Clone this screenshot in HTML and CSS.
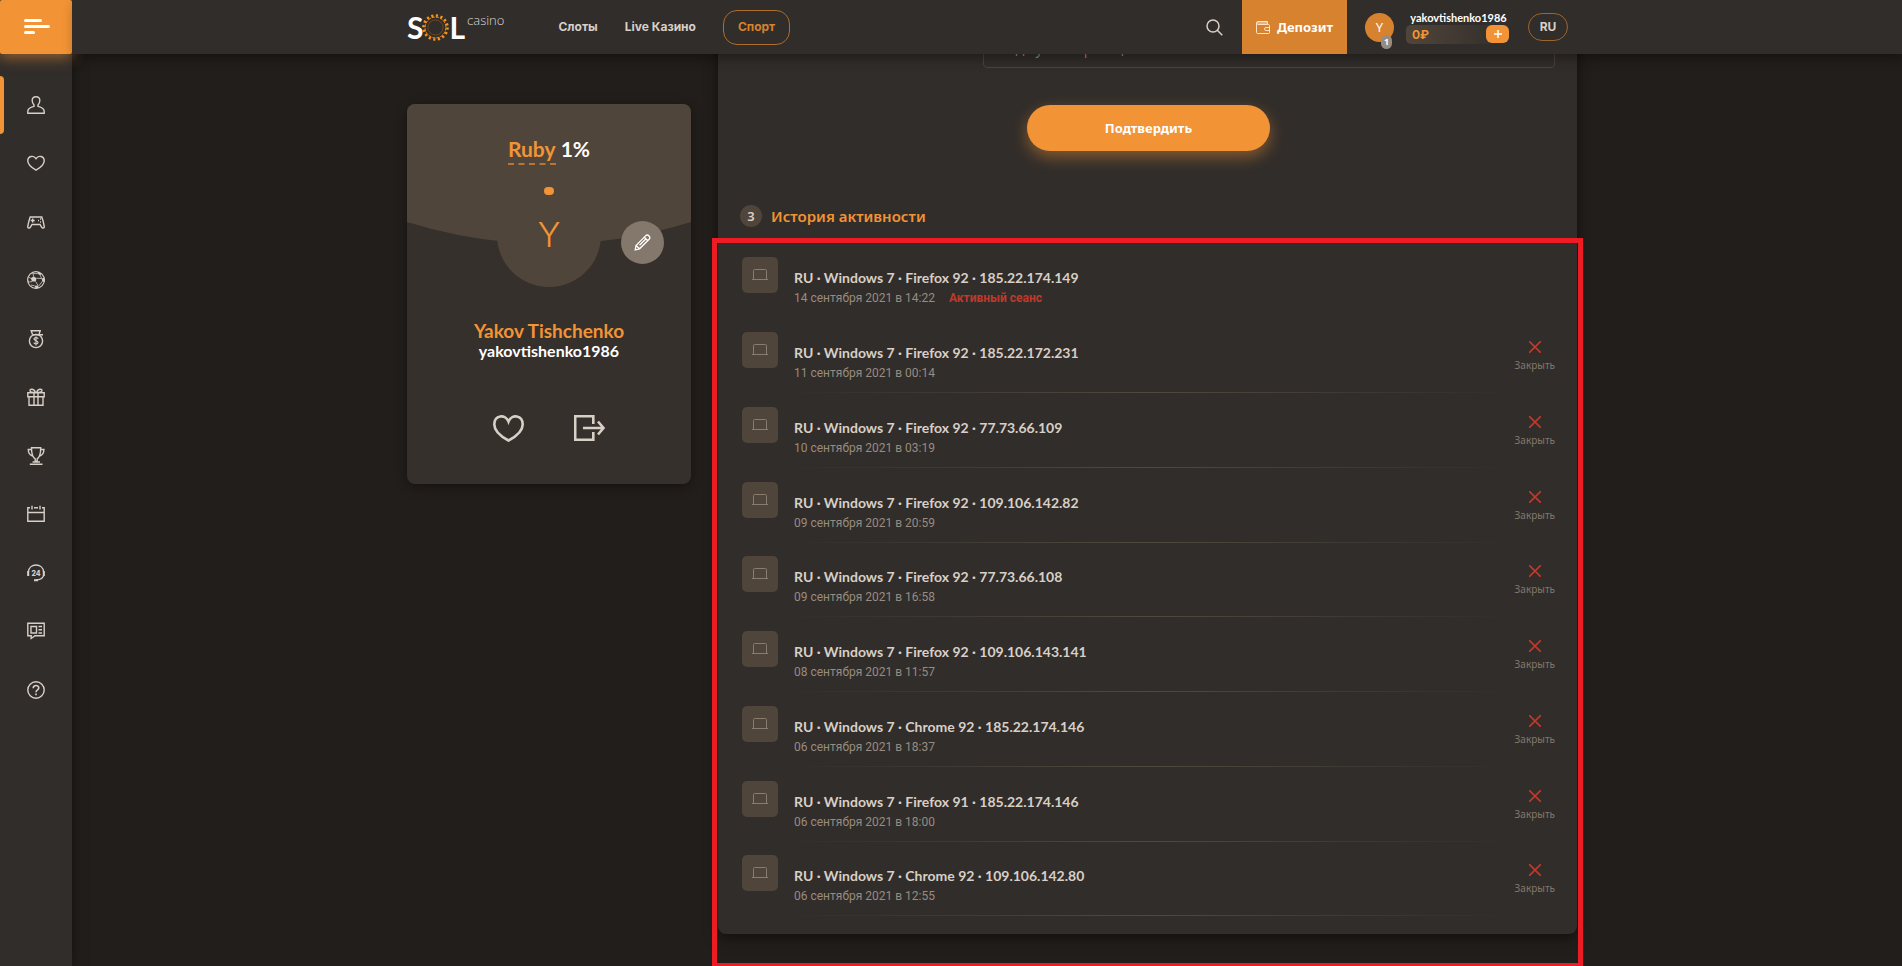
FILE: index.html
```html
<!DOCTYPE html>
<html lang="ru">
<head>
<meta charset="utf-8">
<title>SOL casino</title>
<link rel="stylesheet" href="styles.css">
</head>
<body>
<aside class="sidebar">
  <button class="menu" aria-label="Меню"><svg width="26" height="16" viewBox="0 0 26 16"><path d="M1.500 1.500h15M1.500 7.500h23M1.500 13.500h8" stroke="#fff" stroke-width="3" stroke-linecap="round"/></svg></button>
  <nav class="side-nav" aria-label="Разделы">
    <a class="side-link active" href="#" aria-label="Профиль"><svg class="icon" viewBox="0 0 18 18"><path d="M9 .7c2.500 0 4 1.600 3.800 4-.1 2-1 3.300-1.800 4.300v1.400c3 .8 6.200 2.200 6.200 5v1.900H.8v-1.900c0-2.800 3.200-4.200 6.200-5V9C6.200 8 5.300 6.700 5.200 4.700 5 2.300 6.500.7 9 .7z"/></svg></a>
    <a class="side-link" href="#" aria-label="Избранное"><svg class="icon" viewBox="0 0 18 18"><path d="M9 16.200C4 13.400.8 10.400.8 6.800c0-5 6-5.800 8.200-2.200 2.200-3.600 8.200-2.800 8.200 2.200 0 3.600-3.200 6.600-8.200 9.400z"/></svg></a>
    <a class="side-link" href="#" aria-label="Игры"><svg class="icon" viewBox="0 0 18 18"><path d="M3.200 4h11.600l1.400 4.500 1.100 5c.2 1.800-1.900 2-2.700.7L13 11.500H5l-1.600 2.700c-.8 1.300-2.900 1.100-2.700-.7l1.100-5z"/><path d="M5.700 5.500v4M3.700 7.500h4M11 7.500h1M13 6h1M13 9h1"/></svg></a>
    <a class="side-link" href="#" aria-label="Спорт"><svg class="icon" viewBox="0 0 18 18"><circle cx="9" cy="9" r="8.400" stroke-width="1.100"/><path d="M6.600 5.200 9.600 7.200 8.700 10.600H5L3.800 7.300zM10.800.8l4 2-1.600 1.400-2.800-1.400zM17.500 6.800v4.400l-2.200-.8-.6-2.800zM7.500 14.800l3.600-.2.800 2.200-3 .9zM.6 8.200l1.600 2.700-.6 1.600zM3.800 2.500 6.700.9 6 2.600z" fill="#d8cfc7" stroke="none"/><path d="M6.600 5.200 6 2.600M9.600 7.200l5.100.4M13.200 4.200l1.500 3.400M8.700 10.600l2.400 4M5 10.600 2.200 11M3.800 7.300 1.500 6M15.300 10.400l-3.400 4.500M6 2.600h4.400M7.500 14.800 4 14" stroke-width=".8"/></svg></a>
    <a class="side-link" href="#" aria-label="Деньги"><svg class="icon" viewBox="0 0 18 18"><path d="M5.500 4.500 4.200.8h9L12 4.500M5.500 4.700H16"/><circle cx="9" cy="11" r="6.600"/><path d="M11 9c0-2-4-2-4 0s4 1.600 4 3.500-4 2-4 0M9 6.500v9" stroke-width="1.200"/></svg></a>
    <a class="side-link" href="#" aria-label="Подарки"><svg class="icon" viewBox="0 0 18 18"><path d="M.8 4.700h16.400v4H.8zM2 8.700v8.500h14V8.700M7 4.700v12.500M11 4.700v12.500M8.500 4.500C6 4.500 3 4.500 3 2.500S7.500.5 8.500 4.500zM9.500 4.500C12 4.500 15 4.500 15 2.500S10.500.5 9.500 4.500z"/></svg></a>
    <a class="side-link" href="#" aria-label="Турниры"><svg class="icon" viewBox="0 0 18 18"><path d="M4.500.8h9.200c0 6-1 9.500-3.500 11v2.500h-2v-2.500C5.500 10.300 4.500 6.800 4.500.8zM4.500 2.500H1.300c0 3.500 1.400 5.500 4.200 6.500M13.700 2.500h3.200c0 3.500-1.400 5.500-4.200 6.500M5.500 15h7.500M2.800 17.300H15.500"/></svg></a>
    <a class="side-link" href="#" aria-label="Календарь"><svg class="icon" viewBox="0 0 18 18"><path d="M3 2.800H.8v13.400h16.400V2.800H15M7 2.800h4M.8 7.500h16.400M5 .8v3.800M13 .8v3.800"/></svg></a>
    <a class="side-link" href="#" aria-label="Поддержка"><svg class="icon" viewBox="0 0 18 18"><path d="M1.300 11V8c1-9.300 14.400-9.300 15.400 0v3c-.4 3-2.500 4.700-7.500 5"/><path d="M1.200 7v5M16.800 7v5M7 16.200h4" stroke-width="2"/><text class="icon-text" x="9" y="11.500">24</text></svg></a>
    <a class="side-link" href="#" aria-label="Новости"><svg class="icon" viewBox="0 0 18 18"><path d="M.8 1.300h16.400v12.500H8L4.200 16.500v-2.700H.8zM4 4.500h5.500v6.500H4zM11.500 4.500H15M11.500 7.700H15M11.500 11H15"/></svg></a>
    <a class="side-link" href="#" aria-label="Помощь"><svg class="icon" viewBox="0 0 18 18"><circle cx="9" cy="9" r="8.200"/><path d="M6.200 7.200c0-3.600 5.600-3.600 5.600-.3 0 2-2.800 2-2.800 4.300M9 12.600v1.600" stroke-width="1.600"/></svg></a>
  </nav>
</aside>
<div class="page">
  <header class="header">
    <div class="wrap header-in">
      <a class="logo" href="#"><span>S</span><svg class="sun" width="27" height="27" viewBox="0 0 27 27" fill="none"><circle cx="13.500" cy="13.500" r="12" stroke="#f7941d" stroke-width="2.600" stroke-dasharray="2.200 2.513"/><circle cx="13.500" cy="13.500" r="10.400" stroke="#f7941d" stroke-width="1" stroke-dasharray="3 1.083"/><circle cx="13.500" cy="13.500" r="7.600" stroke="#6e4a20"/></svg><span>L</span><span class="logo-sub">casino</span></a>
      <nav class="top-nav" aria-label="Главное меню"><a href="#">Слоты</a><a href="#">Live Казино</a><a class="pill" href="#">Спорт</a></nav>
      <button class="search" aria-label="Поиск"><svg width="17" height="17" viewBox="0 0 17 17" fill="none" stroke="#d8cfc7" stroke-width="1.500"><circle cx="7" cy="7" r="6"/><path d="m11.300 11.300 5 5"/></svg></button>
      <button class="deposit"><svg width="14" height="13" viewBox="0 0 14 13" fill="none" stroke="#ffe3c4"><path d="M1.500 3.500h11a1 1 0 0 1 1 1v7a1 1 0 0 1-1 1h-11a1 1 0 0 1-1-1V2a1.500 1.500 0 0 1 1.500-1.500h9.500v3M13.500 6.500H10a1.500 1.500 0 0 0 0 3h3.500M1 2h10"/></svg>Депозит</button>
      <a class="avatar" href="#">Y<span class="level">1</span></a>
      <div class="account"><span class="login">yakovtishenko1986</span><div class="balance"><span>0₽</span><button class="plus" aria-label="Пополнить"><svg width="10" height="10" viewBox="0 0 10 10" stroke="#fff" stroke-width="1.500"><path d="M5 1v8M1 5h8"/></svg></button></div></div>
      <button class="lang">RU</button>
    </div>
  </header>
  <main class="main">
    <div class="wrap content">
    <section class="card">
      <svg class="card-bg" viewBox="0 0 284 140" preserveAspectRatio="none"><path d="M0 0h284v118Q142 162 0 118z" fill="#50453a"/></svg>
      <div class="card-body">
        <p class="rank"><a href="#">Ruby</a> 1%</p>
        <span class="dot"></span>
        <div class="face">Y</div>
        <h1 class="name">Yakov Tishchenko</h1>
        <p class="nick">yakovtishenko1986</p>
        <div class="actions">
          <button aria-label="Избранное"><svg width="31" height="27" viewBox="0 0 31 27" fill="none" stroke="#d8cfc7" stroke-width="2.600"><path d="M15.500 25.500C7 21 1.300 15.500 1.300 9.500c0-9.300 11-11 14.200-2.900 3.200-8.100 14.200-6.400 14.200 2.900 0 6-5.700 11.500-14.200 16z"/></svg></button>
          <button aria-label="Выйти"><svg width="31" height="26" viewBox="0 0 31 26" fill="none" stroke="#d8cfc7" stroke-width="2.600"><path d="M19.300 9V1.200H1.200v23.600h18.100V17M9 13h20M24 6.500l5.500 6.500-5.500 6.500"/></svg></button>
        </div>
      </div>
      <button class="edit" aria-label="Редактировать"><svg width="17" height="17" viewBox="0 0 17 17" fill="none" stroke="#fff" stroke-width="1.300"><path d="M1.200 15.800 2 11.500 11.800 1.600q1.600-1.400 3.200.4t.4 3L5.500 14.800zM2 11.500l3.500 3.300M5.500 11.300 12 4.700M10.300 3.200l3.500 3.500"/></svg></button>
    </section>
    <section class="panel">
      <form class="code-form">
        <input class="code" type="text" placeholder="Код аутентификации" aria-label="Код аутентификации">
        <button class="confirm" type="button">Подтвердить</button>
      </form>
      <h2 class="title"><span class="num">3</span>История активности</h2>
      <ul class="list" id="list"></ul>
      <div class="frame"></div>
    </section>
    </div>
  </main>
</div>
<script src="script.js"></script>
</body>
</html>
```
FILE: script.js
```js
const sessions = [
  ["Firefox 92", "185.22.174.149", "14 сентября 2021 в 14:22", true],
  ["Firefox 92", "185.22.172.231", "11 сентября 2021 в 00:14"],
  ["Firefox 92", "77.73.66.109", "10 сентября 2021 в 03:19"],
  ["Firefox 92", "109.106.142.82", "09 сентября 2021 в 20:59"],
  ["Firefox 92", "77.73.66.108", "09 сентября 2021 в 16:58"],
  ["Firefox 92", "109.106.143.141", "08 сентября 2021 в 11:57"],
  ["Chrome 92", "185.22.174.146", "06 сентября 2021 в 18:37"],
  ["Firefox 91", "185.22.174.146", "06 сентября 2021 в 18:00"],
  ["Chrome 92", "109.106.142.80", "06 сентября 2021 в 12:55"]
];
document.getElementById("list").innerHTML = sessions.map(([browser, ip, date, current]) => `
  <li class="row">
    <span class="device"><svg width="16" height="12" viewBox="0 0 16 12" fill="none" stroke="#8a7c6e"><path d="M1.500 10V1.500q0-1 1-1h11q1 0 1 1V10M0 10.500h16"/></svg></span>
    <div class="info">
      <p class="agent">RU · Windows 7 · ${browser} · ${ip}</p>
      <p class="date">${date}${current ? '<strong class="current">Активный сеанс</strong>' : ""}</p>
    </div>
    ${current ? "" : '<button class="close"><svg width="12" height="12" viewBox="0 0 12 12" stroke="#c0392b" stroke-width="1.600"><path d="m0 0 12 12M12 0 0 12"/></svg>Закрыть</button>'}
  </li>`).join("");
```
FILE: styles.css
```css
* { box-sizing: border-box; margin: 0; padding: 0; }
body {
  display: flex;
  height: 100vh;
  overflow: hidden;
  background: #221e1b;
  color: #d8cfc7;
  font-family: "Noto Sans", "Open Sans", sans-serif;
  font-size: 14px;
}
a { color: inherit; text-decoration: none; }
button { border: 0; background: none; color: inherit; font: inherit; cursor: pointer; }

.sidebar { width: 72px; flex: none; background: #312d2a; box-shadow: 0 0 12px rgba(0, 0, 0, .5); position: relative; z-index: 1; }
.menu { display: flex; align-items: center; justify-content: center; width: 72px; height: 54px; padding-left: 2px; border-radius: 2px; background: #f29335; box-shadow: 0 4px 14px rgba(242, 147, 53, .5); }
.side-nav { display: flex; flex-direction: column; padding-top: 21px; }
.side-link { display: flex; align-items: center; justify-content: center; height: 58px; }
.side-link:nth-child(odd) { height: 59px; }
.side-link.active::before { content: ""; width: 4px; height: 58px; border-radius: 0 4px 4px 0; background: #f29335; margin-right: auto; }
.side-link.active { padding-right: 27px; }
.icon { width: 18px; height: 18px; fill: none; stroke: #d8cfc7; stroke-width: 1.4px; overflow: visible; }
.icon-text { fill: #d8cfc7; stroke: none; font: 800 7px Inter, sans-serif; text-anchor: middle; }

.page { flex: 1; min-width: 0; }
.wrap { max-width: 1170px; margin: 0 auto; }
.header { position: relative; z-index: 2; background: #312d2a; padding-left: 10px; box-shadow: 4px 4px 12px rgba(0, 0, 0, .4); }
.header-in { display: flex; align-items: center; height: 54px; padding-right: 9px; }
.logo { display: flex; align-items: center; height: 54px; color: #fff; font: 700 30px/31px Lato, sans-serif; }
.sun { margin: 0 0 0 -1px; }
.logo-sub { align-self: flex-start; padding-top: 12px; margin-left: 2px; font: 300 13px/16px "Open Sans", sans-serif; color: #d8d8d8; }
.top-nav { display: flex; align-items: center; margin-left: 54px; font: 700 12px/16px Inter, sans-serif; }
.top-nav a { margin-right: 27px; }
.top-nav .pill { display: flex; align-items: center; height: 35px; padding: 0 14px; margin: 0; border: 1px solid #b06c2b; border-radius: 14px; color: #d6822e; }
.search { margin-left: auto; height: 17px; display: flex; }
.deposit { display: flex; align-items: center; justify-content: center; gap: 7px; width: 105px; height: 54px; margin-left: 19px; background: #d6822e; color: #fff; font-size: 13px; font-weight: 700; }
.avatar { position: relative; display: flex; align-items: center; justify-content: center; width: 29px; height: 29px; margin-left: 18px; border-radius: 50%; background: #d6822e; color: #fff; font-size: 13px; }
.level { position: absolute; right: 2px; bottom: -7px; width: 11px; height: 14px; border-radius: 6px; background: #978c80; font-size: 9px; font-weight: 700; line-height: 14px; text-align: center; }
.account { width: 103px; margin-left: 12px; }
.login { display: block; font: 700 11px/14px Lato, sans-serif; color: #fff; text-align: center; padding-left: 2px; }
.balance { display: flex; align-items: center; justify-content: space-between; height: 19px; padding-left: 6px; border-radius: 5px; background: linear-gradient(90deg, #50453a, #312d2a); color: #f29335; font: 700 12px/19px Inter, "Noto Sans", sans-serif; }
.plus { display: flex; align-items: center; justify-content: center; width: 23px; height: 18px; border-radius: 6px; background: #f29335; }
.lang { width: 40px; height: 28px; margin-left: 19px; border: 1px solid #a0642b; border-radius: 14px; font: 700 12px/16px Inter, sans-serif; }

.main { padding-left: 10px; }
.content { display: grid; grid-template-columns: 284px 1fr; gap: 27px; align-items: start; }
.card { position: relative; margin-top: 50px; border-radius: 8px; overflow: hidden; background: #35302c; box-shadow: 0 3px 12px rgba(0, 0, 0, .4); }
.card-bg { position: absolute; top: 0; left: 0; width: 100%; height: 140px; }
.card-body { position: relative; display: flex; flex-direction: column; align-items: center; padding: 30px 0 42px; }
.rank { font: 700 21px/30px Lato, sans-serif; color: #fff; }
.rank a { display: inline-block; border-bottom: 2px dashed #b97532; color: #f29335; line-height: 28px; }
.dot { width: 10px; height: 8px; margin-top: 22px; border-radius: 4px; background: #f29335; }
.face { width: 104px; height: 104px; margin-top: -12px; border-radius: 50%; background: linear-gradient(transparent 40px, #50453a 40px); color: #f29335; font: 300 34px/104px Inter, sans-serif; text-align: center; }
.name { margin-top: 32px; color: #f29335; font: 700 19px/24px Lato, sans-serif; }
.nick { margin-top: -2px; font: 700 16px/20px Lato, sans-serif; color: #fff; }
.actions { display: flex; gap: 50px; margin-top: 54px; }
.actions button { display: flex; }
.edit { position: absolute; top: 117px; right: 27px; display: flex; align-items: center; justify-content: center; width: 43px; height: 43px; border-radius: 50%; background: #84776b; }

.panel { position: relative; margin-top: -26px; padding: 0 22px 18px 24px; border-radius: 8px; background: #312d2a; box-shadow: 0 4px 14px rgba(0, 0, 0, .5); }
.code-form { display: flex; flex-direction: column; }
.code { width: 572px; height: 40px; margin-left: auto; padding: 0 15px; border: 1px solid #4d433a; border-radius: 4px; background: none; color: #d8cfc7; font: 14px "Noto Sans", sans-serif; }
.code::placeholder { color: #978c80; }
.confirm { align-self: center; width: 243px; height: 46px; margin-top: 37px; border-radius: 23px; background: #f29335; box-shadow: 0 6px 16px rgba(242, 147, 53, .45); color: #fff; font-weight: 700; font-size: 13px; }
.title { display: flex; align-items: center; gap: 9px; height: 22px; margin: 54px 0 30px -2px; color: #f29335; font-size: 15px; font-weight: 600; }
.num { width: 22px; height: 22px; border-radius: 50%; background: #50453a; color: #d8cfc7; font-size: 13px; line-height: 22px; text-align: center; }
.list { list-style: none; }
.row { display: flex; height: 61px; margin-bottom: 14px; border-bottom: 1px solid; border-image: linear-gradient(90deg, transparent 5%, #50493f 50%, transparent 95%) 1; }
.row:nth-child(4n) { margin-bottom: 13px; }
.row:first-child { border-image: none; border-color: transparent; }
.row:last-child { margin-bottom: 0; }
.device { display: flex; align-items: center; justify-content: center; width: 36px; height: 36px; border-radius: 5px; background: #50453a; flex: none; }
.info { margin-left: 16px; padding-top: 11px; }
.agent { font: 700 14px/20px Lato, sans-serif; }
.date { font: 12px/21px Roboto, sans-serif; color: #978c80; }
.current { margin-left: 14px; color: #c0392b; }
.close { display: flex; flex-direction: column; align-items: center; gap: 5px; margin-left: auto; padding-top: 9px; align-self: flex-start; color: #84776b; font-size: 10px; line-height: 14px; }
.frame { position: absolute; top: 210px; right: -6px; bottom: -34px; left: -6px; border: 5px solid #ed1c24; pointer-events: none; }
```
